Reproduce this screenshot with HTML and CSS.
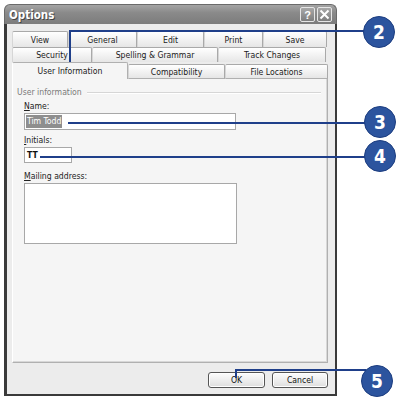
FILE: index.html
```html
<!DOCTYPE html>
<html>
<head>
<meta charset="utf-8">
<link rel="stylesheet" href="styles.css">
</head>
<body>
<div class="stage">
  <div class="window">
    <div class="titlebar">
      <span class="title">Options</span>
      <div class="tbtns">
        <span class="tbtn">?</span>
        <span class="tbtn"><svg width="11" height="11" viewBox="0 0 11 11"><path d="M1.5 1.5 L9.5 9.5 M9.5 1.5 L1.5 9.5" stroke="#fff" stroke-width="2" fill="none"/></svg></span>
      </div>
    </div>
    <div class="frame">
      <div class="tabrow r1">
        <div class="tab t-view">View</div>
        <div class="tab t-general">General</div>
        <div class="tab t-edit">Edit</div>
        <div class="tab t-print">Print</div>
        <div class="tab t-save">Save</div>
      </div>
      <div class="tabrow r2">
        <div class="tab t-security">Security</div>
        <div class="tab t-spelling">Spelling &amp; Grammar</div>
        <div class="tab t-track">Track Changes</div>
      </div>
      <div class="tabrow r3">
        <div class="tab sel t-user">User Information</div>
        <div class="tab t-compat">Compatibility</div>
        <div class="tab t-files">File Locations</div>
      </div>
      <div class="panel">
        <div class="group-title"><span>User information</span></div>
        <div class="fields">
          <div class="label first"><u>N</u>ame:</div>
          <div class="input name"><span class="selected-text">Tim Todd</span></div>
          <div class="label"><u>I</u>nitials:</div>
          <div class="input initials">TT</div>
          <div class="label mail"><u>M</u>ailing address:</div>
          <div class="textarea"></div>
        </div>
      </div>
      <div class="buttons">
        <div class="btn ok">OK</div>
        <div class="btn cancel">Cancel</div>
      </div>
    </div>
  </div>
  <svg class="callouts" width="400" height="399" viewBox="0 0 400 399">
    <g stroke="#1f3f8a" stroke-width="2" fill="none">
      <path d="M70 62 V31 H366"/>
      <path d="M68 123 H366"/>
      <path d="M40 157 H366"/>
      <path d="M236 378 V370 H366"/>
    </g>
    <g class="bubbles">
      <circle cx="379" cy="32" r="15.5"/>
      <circle cx="380" cy="122" r="15.5"/>
      <circle cx="380" cy="156" r="15.5"/>
      <circle cx="377" cy="381" r="15.5"/>
    </g>
    <g class="nums">
      <text x="379" y="39">2</text>
      <text x="380" y="129">3</text>
      <text x="380" y="163">4</text>
      <text x="377" y="388">5</text>
    </g>
  </svg>
</div>
</body>
</html>
```
FILE: styles.css
```css
* { box-sizing: border-box; }
html, body { margin: 0; padding: 0; background: #fff; }
body { font-family: "DejaVu Sans Condensed", "DejaVu Sans", sans-serif; font-size: 8.6px; color: #1a1a1a; }
.stage { position: relative; width: 400px; height: 399px; overflow: hidden; }

.window { margin: 4px 0 0 4px; width: 333px; height: 392px; display: flex; flex-direction: column; }
.titlebar {
  height: 20px; flex: none;
  background: linear-gradient(#a4a4a4, #8a8a8a 40%, #7c7c7c);
  border-radius: 6px 6px 0 0;
  border: 1px solid #6a6a6a; border-bottom: none;
  display: flex; align-items: center; justify-content: space-between;
  padding: 0 4px 0 4px;
}
.title { color: #fff; font-weight: bold; font-size: 11.5px; text-shadow: 1px 1px 0 #444; }
.tbtns { display: flex; gap: 2px; }
.tbtn {
  width: 15px; height: 15px; display: flex; align-items: center; justify-content: center;
  background: linear-gradient(#a8a8a8, #7e7e7e);
  border: 1px solid #e6e6e6; border-radius: 2px;
  color: #fff; font-weight: bold; font-size: 11px; font-family: "Liberation Sans", sans-serif;
}

.frame {
  flex: 1; background: #ececec;
  border-left: 3px solid #3a3a3a; border-right: 2px solid #3a3a3a; border-bottom: 2px solid #3a3a3a;
  padding: 7px 7px 0 5px;
  display: flex; flex-direction: column;
}

.tabrow { display: flex; align-items: flex-end; }
.r1 { height: 16px; }
.r2 { height: 15px; }
.r3 { height: 17px; position: relative; z-index: 1; margin-bottom: -1px; }
.tab {
  height: 100%; flex: none;
  display: flex; align-items: center; justify-content: center;
  background: linear-gradient(#ffffff, #f0f0f0 60%, #e6e6e6);
  border: 1px solid #a9a9a9; border-bottom: none; border-left-color: #d6d6d6;
  border-radius: 2px 2px 0 0;
  white-space: nowrap;
}
.r3 .tab { height: 15px; border-bottom: 1px solid #b0b0b0; }
.r3 .tab.sel { height: 17px; background: #f5f5f5; border-bottom: none; border-color: #b0b0b0; border-left-color: #fff; }

.t-view { width: 56px; }
.t-general { width: 69px; }
.t-edit { width: 67px; }
.t-print { width: 59px; }
.t-save { width: 64px; }
.t-security { width: 80px; }
.t-spelling { width: 126px; }
.t-track { width: 108px; }
.t-user { width: 116px; }
.t-compat { width: 97px; }
.t-files { width: 103px; }

.panel {
  width: 316px; height: 285px; flex: none;
  background: #f5f5f5;
  border: 1px solid #b0b0b0; border-left-color: #fff; border-top-color: #fff;
  box-shadow: inset -1px -1px 0 #d8d8d8;
  padding: 8px 6px 0 4px;
}
.group-title { display: flex; align-items: center; color: #7a7a7a; line-height: 11px; }
.group-title::after { content: ""; flex: 1; border-top: 1px solid #d6d6d6; border-bottom: 1px solid #fff; margin-left: 5px; }
.fields { padding-left: 7px; }
.label { line-height: 11px; margin-top: 5px; color: #222; }
.label.first { margin-top: 3px; }
.label.mail { margin-top: 8px; }
.input {
  margin-top: 1px; background: #fff; border: 1px solid #a8a8a8;
  display: flex; align-items: center; padding-left: 1px; color: #111;
}
.input.name { width: 212px; height: 17px; }
.input.initials { width: 48px; height: 16px; font-weight: bold; padding-left: 2px; }
.selected-text { background: #8e8e8e; color: #fff; padding: 1px 1px; line-height: 11px; }
.textarea { margin-top: 1px; width: 213px; height: 61px; background: #fff; border: 1px solid #a8a8a8; }

.buttons { display: flex; justify-content: flex-end; gap: 7px; margin-top: 9px; }
.btn {
  height: 16px; display: flex; align-items: center; justify-content: center;
  background: linear-gradient(#fdfdfd, #ebebeb 60%, #dedede);
  border: 1px solid #555; border-radius: 3px;
  box-shadow: inset 0 0 0 1px #fff;
  color: #111;
}
.ok { width: 57px; }
.cancel { width: 56px; }

.callouts { position: absolute; left: 0; top: 0; pointer-events: none; }
.bubbles circle { fill: #2c549e; stroke: #1c3d80; stroke-width: 1; }
.nums text { fill: #fff; font-family: "DejaVu Sans Condensed", sans-serif; font-weight: bold; font-size: 19px; text-anchor: middle; }
```
